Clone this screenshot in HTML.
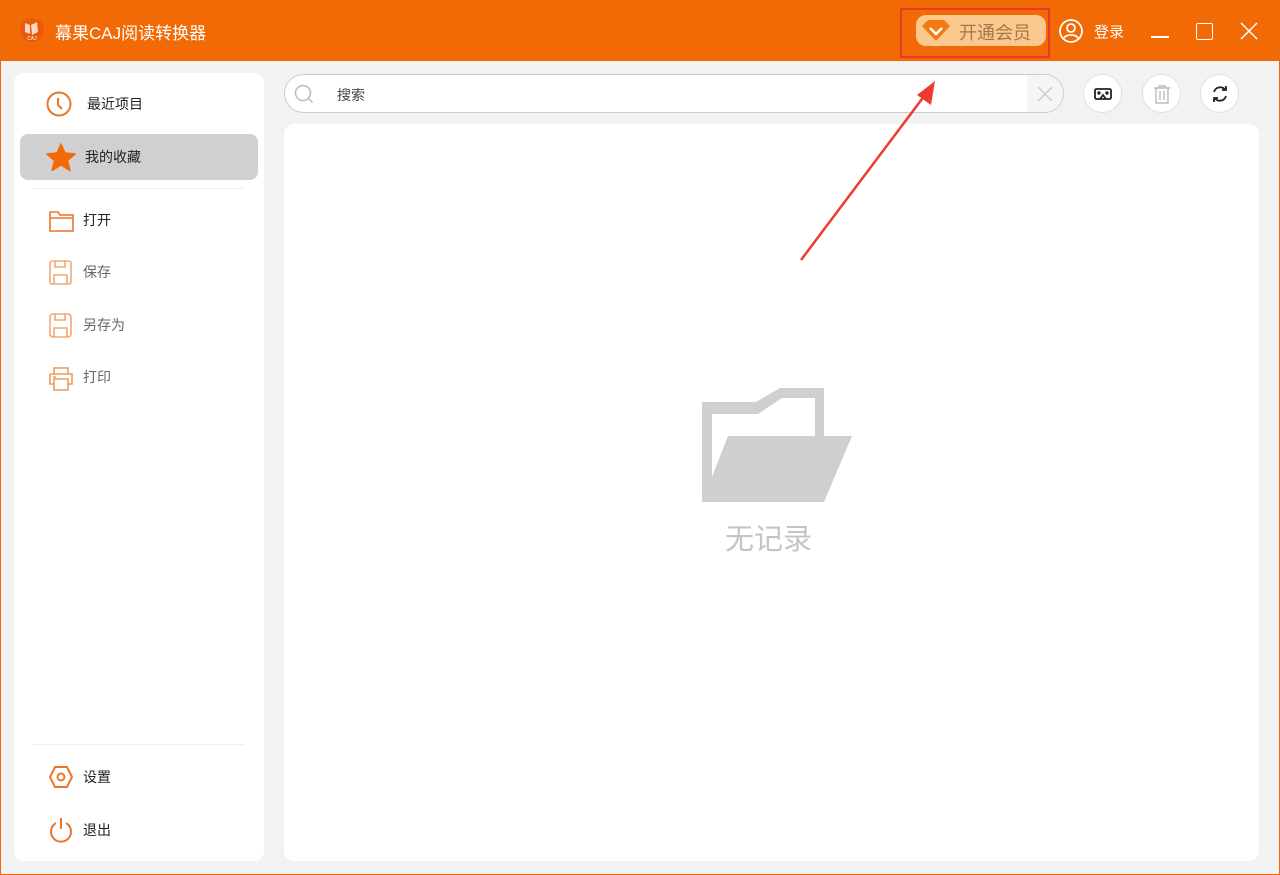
<!DOCTYPE html>
<html><head><meta charset="utf-8"><style>
*{margin:0;padding:0;box-sizing:border-box}
body{width:1280px;height:875px;overflow:hidden;background:#f2f2f2;font-family:"Liberation Sans","Noto Sans CJK SC",sans-serif;position:relative}
.title{position:absolute;left:0;top:0;width:1280px;height:61px;background:#f26a05}
.t{position:absolute;color:#fff;font-size:17px;top:19px}
.side{position:absolute;left:14px;top:73px;width:250px;height:788px;background:#fff;border-radius:10px}
.item{position:absolute;left:6px;width:238px;height:46px;font-size:14px;color:#222;border-radius:8px}
.item span{position:absolute;left:65px;top:13px}
.item svg{position:absolute;left:26px;top:10px}
.main{position:absolute;left:284px;top:124px;width:975px;height:737px;background:#fff;border-radius:10px}
.search{position:absolute;left:284px;top:74px;width:780px;height:39px;border:1px solid #ccc;border-radius:20px;background:#fff;overflow:hidden}
.cb{position:absolute;top:74px;width:39px;height:39px;border-radius:50%;border:1px solid #e0e0e0;background:#fff}
.cb svg{position:absolute;left:9px;top:9px}
</style></head><body>
<div class="title"></div>
<svg style="position:absolute;left:20px;top:17px" width="24" height="26" viewBox="0 0 24 26"><circle cx="12" cy="13" r="12" fill="#e85a0a"/><path d="M5 6l5 2v9l-5-2z M11 8l6-3 1 10-6 3z" fill="#fbd6c4"/><text x="12" y="23" font-size="5" fill="#fff" text-anchor="middle" font-family="Liberation Sans">CAJ</text></svg>
<div class="t" style="left:55px">幕果CAJ阅读转换器</div>
<div style="position:absolute;left:900px;top:8px;width:150px;height:50px;border:2px solid #e83a2a"></div>
<div style="position:absolute;left:916px;top:15px;width:130px;height:31px;border-radius:10px;background:#fbc98d"></div>
<svg style="position:absolute;left:920px;top:19px" width="32" height="24" viewBox="0 0 32 24"><path d="M2 7l6-6h16l6 6-14 15z" fill="#f27a12"/><path d="M10 9l6 6 6-6" stroke="#fff" stroke-width="2.5" fill="none"/></svg>
<div style="position:absolute;left:959px;top:19px;font-size:18px;color:#a0784a">开通会员</div>
<svg style="position:absolute;left:1059px;top:19px" width="24" height="24" viewBox="0 0 24 24" fill="none" stroke="#fff" stroke-width="1.8"><circle cx="12" cy="12" r="11"/><circle cx="12" cy="9" r="4"/><path d="M5 19c2-4 12-4 14 0"/></svg>
<div style="position:absolute;left:1094px;top:21px;font-size:15px;color:#fff">登录</div>
<div style="position:absolute;left:1151px;top:36px;width:18px;height:1.5px;background:#fff"></div>
<div style="position:absolute;left:1196px;top:23px;width:17px;height:17px;border:1.5px solid #fff;border-radius:2px"></div>
<svg style="position:absolute;left:1240px;top:22px" width="18" height="18" viewBox="0 0 18 18" stroke="#fff" stroke-width="1.5"><path d="M1 1l16 16M17 1L1 17"/></svg>
<div class="side">
<div class="item" style="top:8px"><svg width="26" height="26" viewBox="0 0 26 26" fill="none" stroke="#e8772a" stroke-width="2"><circle cx="13" cy="13" r="11.5"/><path d="M12 7v7l4 4"/></svg><span style="left:67px">最近项目</span></div>
<div class="item" style="top:61px;background:#d0d0d0"><svg width="30" height="28" viewBox="0 0 30 28" style="left:26px;top:9px"><path d="M15 1l4 9 10 1-7.5 6.5 2.5 10-9-5.5-9 5.5 2.5-10L1 11l10-1z" fill="#f26a05" stroke="#f26a05" stroke-linejoin="round" stroke-width="1.5"/></svg><span>我的收藏</span></div>
<div style="position:absolute;left:18px;top:115px;width:212px;height:1px;background:#f0f0f0"></div>
<div class="item" style="top:124px"><svg width="26" height="24" viewBox="0 0 26 24" style="left:29px;top:13px" fill="none" stroke="#e8772a" stroke-width="1.6"><path d="M1 2h8l2 3h13v16H1z M1 8h23"/></svg><span style="left:63px">打开</span></div>
<div class="item" style="top:176px;color:#666"><svg width="24" height="26" viewBox="0 0 24 26" style="left:29px;top:11px" fill="none" stroke="#f0a878" stroke-width="1.6"><rect x="1" y="1" width="21" height="23" rx="2"/><path d="M6 1v6h10V1 M5 24v-9h13v9"/></svg><span style="left:63px">保存</span></div>
<div class="item" style="top:229px;color:#666"><svg width="24" height="26" viewBox="0 0 24 26" style="left:29px;top:11px" fill="none" stroke="#f0a878" stroke-width="1.6"><rect x="1" y="1" width="21" height="23" rx="3"/><path d="M6 1v6h10V1 M5 24v-9h13v9"/></svg><span style="left:63px">另存为</span></div>
<div class="item" style="top:281px;color:#666"><svg width="24" height="24" viewBox="0 0 24 24" style="left:29px;top:13px" fill="none" stroke="#ec9a60" stroke-width="1.6"><path d="M5 7V1h14v6 M1 7h22v10h-4 M5 17H1V7 M5 12h14v11H5z M4 10h3"/></svg><span style="left:63px">打印</span></div>
<div style="position:absolute;left:18px;top:671px;width:212px;height:1px;background:#f0f0f0"></div>
<div class="item" style="top:681px"><svg width="24" height="24" viewBox="0 0 24 24" style="left:29px;top:11px" fill="none" stroke="#e8772a" stroke-width="2"><path d="M6 2h12l5 10-5 10H6L1 12z"/><circle cx="12" cy="12" r="3.5"/></svg><span style="left:63px">设置</span></div>
<div class="item" style="top:734px"><svg width="24" height="26" viewBox="0 0 24 26" style="left:29px;top:10px" fill="none" stroke="#e8772a" stroke-width="2"><path d="M7 6a10 10 0 1 0 10 0"/><path d="M12 1v11"/></svg><span style="left:63px">退出</span></div>
</div>
<div class="search"><svg style="position:absolute;left:9px;top:9px" width="20" height="20" viewBox="0 0 20 20" fill="none" stroke="#bbb" stroke-width="1.5"><circle cx="9" cy="9" r="7.5"/><path d="M14.5 14.5l4 4"/></svg>
<div style="position:absolute;left:52px;top:10px;font-size:14px;color:#444">搜索</div>
<div style="position:absolute;left:742px;top:0;width:38px;height:39px;background:#f5f5f5"></div>
<svg style="position:absolute;left:752px;top:11px" width="16" height="16" viewBox="0 0 16 16" stroke="#ccc" stroke-width="1.5"><path d="M1 1l14 14M15 1L1 15"/></svg></div>
<div class="cb" style="left:1083px"><svg width="20" height="20" viewBox="0 0 20 20" fill="none" stroke="#222" stroke-width="1.8"><rect x="2" y="5" width="16" height="10" rx="1.5"/><path d="M7 15l3-4 3 4"/><circle cx="6" cy="9" r=".8"/><circle cx="14" cy="9" r=".8"/></svg></div>
<div class="cb" style="left:1142px"><svg width="20" height="20" viewBox="0 0 20 20" fill="none" stroke="#bbb" stroke-width="1.4"><path d="M2 4h16M7 4V2h6v2M4 4v15h12V4M8 7v9M12 7v9"/></svg></div>
<div class="cb" style="left:1200px"><svg width="20" height="20" viewBox="0 0 20 20" fill="none" stroke="#222" stroke-width="1.8"><path d="M4 8a6.5 6.5 0 0 1 11.5-2M16 12a6.5 6.5 0 0 1-11.5 2"/><path d="M16 2v4h-4M4 18v-4h4"/></svg></div>
<div class="main"></div>
<svg style="position:absolute;left:700px;top:388px" width="152" height="114" viewBox="0 0 152 114"><path d="M2 14h54l24-14h44v48H115V10H82L58 26H12v88H2z" fill="#cfcfcf"/><path d="M28 48h124l-28 66H2z" fill="#cfcfcf"/></svg>
<div style="position:absolute;left:725px;top:516px;font-size:29px;color:#c4c4c4">无记录</div>
<svg style="position:absolute;left:795px;top:75px" width="150" height="190" viewBox="0 0 150 190"><path d="M6 185L130 20" stroke="#ee3a30" stroke-width="2.5"/><path d="M140 6l-4 24-14-10z" fill="#ee3a30"/></svg>
<div style="position:absolute;left:0;top:0;width:1280px;height:875px;border:1px solid #f06a0c;pointer-events:none"></div>
</body></html>
